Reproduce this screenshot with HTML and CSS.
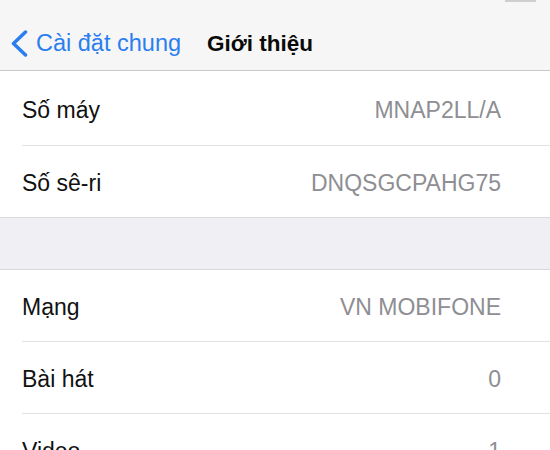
FILE: index.html
```html
<!DOCTYPE html>
<html lang="vi">
<head>
<meta charset="utf-8">
<title>Giới thiệu</title>
<link rel="stylesheet" href="styles.css">
</head>
<body>
<div class="screen">
  <header class="navbar">
    <div class="status"><span class="status-mark"></span></div>
    <div class="nav-row">
      <a class="back" href="#">
        <svg class="chevron" width="19" height="27" viewBox="0 0 19 27"><polyline points="15.5,2 3.5,13.5 15.5,25" fill="none" stroke="#2a7ef0" stroke-width="3.5" stroke-linecap="round" stroke-linejoin="round"/></svg>
        <span class="back-label">Cài đặt chung</span>
      </a>
      <h1 class="title">Giới thiệu</h1>
    </div>
  </header>

  <section class="group group-first">
    <div class="row row-first"><span class="label">Số máy</span><span class="value">MNAP2LL/A</span></div>
    <div class="row"><span class="label">Số sê-ri</span><span class="value">DNQSGCPAHG75</span></div>
  </section>

  <div class="spacer"></div>

  <section class="group">
    <div class="row"><span class="label">Mạng</span><span class="value">VN MOBIFONE</span></div>
    <div class="row"><span class="label">Bài hát</span><span class="value">0</span></div>
    <div class="row"><span class="label">Video</span><span class="value">1</span></div>
  </section>
</div>
</body>
</html>
```

FILE: styles.css
```css
html, body {
  margin: 0;
  padding: 0;
  background: #ffffff;
}

body {
  font-family: "Liberation Sans", Arial, sans-serif;
  width: 550px;
  height: 450px;
  overflow: hidden;
}

.screen {
  display: flex;
  flex-direction: column;
}

.navbar {
  background: #f6f6f6;
  border-bottom: 1px solid #c9c9cc;
  height: 70px;
  display: flex;
  flex-direction: column;
}

.status {
  height: 17px;
  display: flex;
  justify-content: flex-end;
  align-items: flex-start;
  padding-right: 14px;
}

.status-mark {
  width: 31px;
  height: 2px;
  background: #cfcfcf;
}

.nav-row {
  flex: 1;
  display: flex;
  align-items: center;
  gap: 26px;
}

.back {
  display: flex;
  align-items: center;
  text-decoration: none;
  color: #2a7ef0;
  padding-left: 10px;
  gap: 7px;
}

.chevron {
  display: block;
  flex: none;
}

.back-label {
  font-size: 23.5px;
}

.title {
  margin: 0;
  font-size: 22.5px;
  font-weight: bold;
  color: #0a0a0a;
}

.group {
  display: flex;
  flex-direction: column;
  background: #ffffff;
}

.row {
  height: 72px;
  margin-left: 22px;
  padding-right: 49px;
  padding-top: 4px;
  box-sizing: border-box;
  display: flex;
  align-items: center;
  justify-content: space-between;
  border-bottom: 1px solid #e2e2e4;
  font-size: 23px;
}

.row-first {
  height: 75px;
  padding-top: 5px;
}

.group-first .row:last-child {
  margin-left: 0;
  padding-left: 22px;
  height: 72px;
  border-bottom: 1px solid #d9d9dc;
}

.label {
  color: #111111;
}

.value {
  color: #8e8e93;
}

.spacer {
  height: 51px;
  background: #efeff4;
  border-bottom: 1px solid #d9d9dc;
}
```
